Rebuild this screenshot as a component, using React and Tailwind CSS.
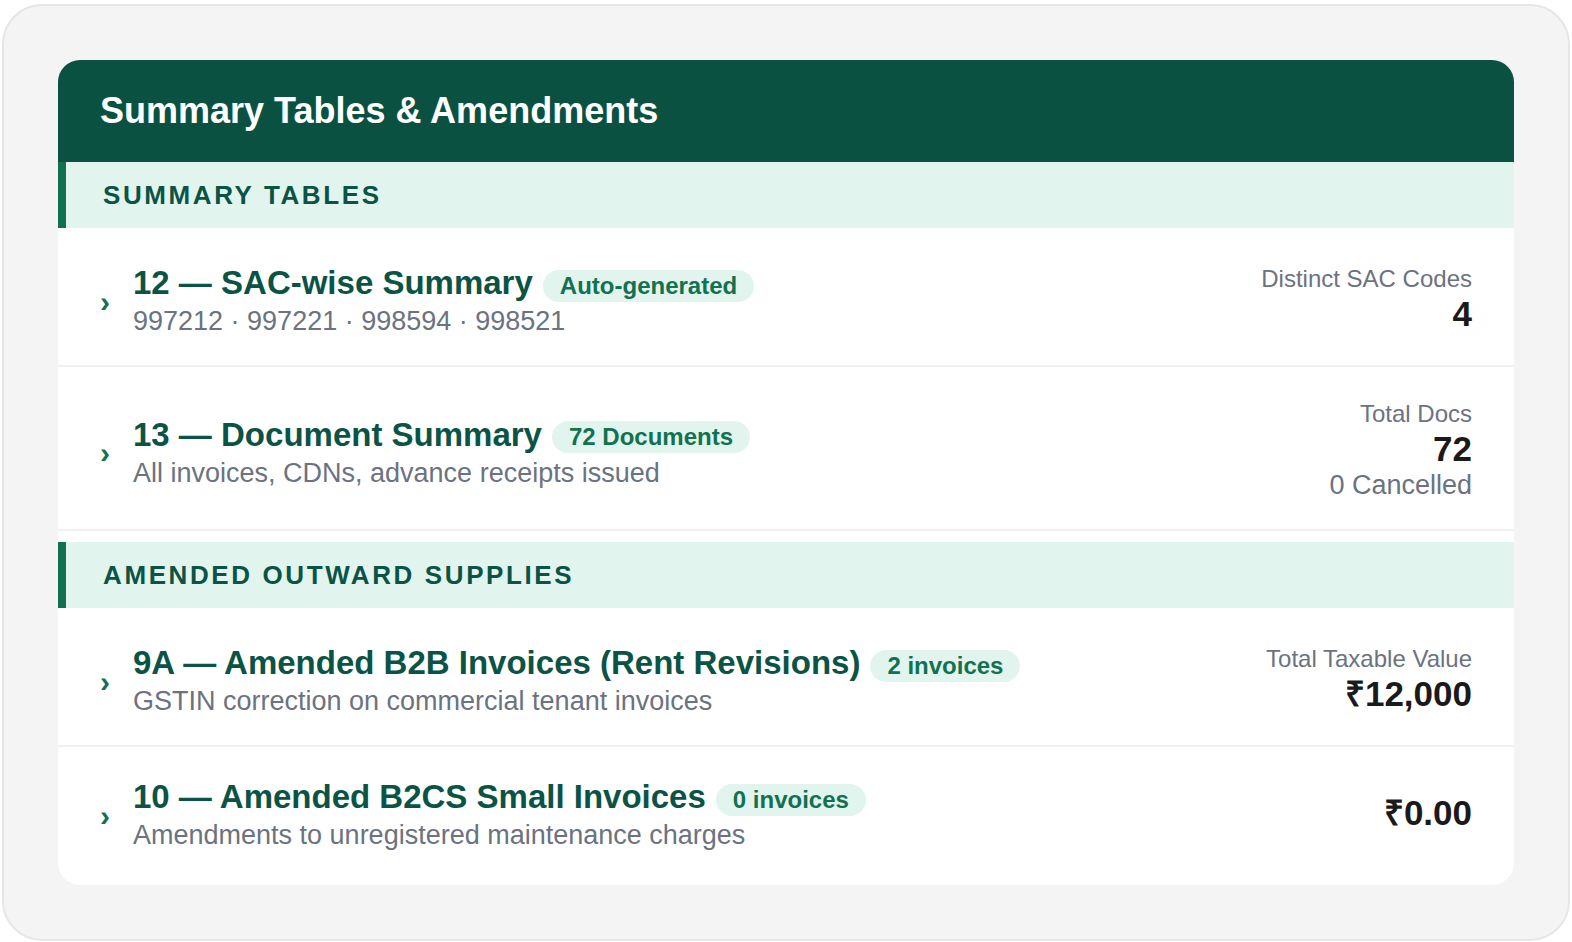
const sections = [
  {
    heading: 'Summary Tables',
    rows: [
      {
        title: '12 — SAC-wise Summary',
        badge: 'Auto-generated',
        sub: '997212 · 997221 · 998594 · 998521',
        label: 'Distinct SAC Codes',
        value: '4',
      },
      {
        title: '13 — Document Summary',
        badge: '72 Documents',
        sub: 'All invoices, CDNs, advance receipts issued',
        label: 'Total Docs',
        value: '72',
        note: '0 Cancelled',
      },
    ],
  },
  {
    heading: 'Amended Outward Supplies',
    rows: [
      {
        title: '9A — Amended B2B Invoices (Rent Revisions)',
        badge: '2 invoices',
        sub: 'GSTIN correction on commercial tenant invoices',
        label: 'Total Taxable Value',
        value: '₹12,000',
      },
      {
        title: '10 — Amended B2CS Small Invoices',
        badge: '0 invoices',
        sub: 'Amendments to unregistered maintenance charges',
        value: '₹0.00',
      },
    ],
  },
];

function Row({ row, last }) {
  return (
    <div
      className={`flex items-center justify-between px-[42px] ${
        last ? 'pt-[27px] pb-[34px]' : 'pt-[32px] pb-[28px] border-b-2 border-[#f0f0f0]'
      }`}
    >
      <div className="flex items-center gap-[23px]">
        <span className="text-[30px] font-bold text-[#127150] leading-none pt-[6px]">›</span>
        <div className="flex flex-col">
          <div className="flex items-center gap-[10px]">
            <span className="text-[33px] font-bold text-[#0b5345] leading-[45px]">{row.title}</span>
            <span className="mt-[6px] rounded-full bg-[#e1f5ee] px-[17px] py-[2px] text-[24px] font-bold leading-[28px] text-[#127150]">
              {row.badge}
            </span>
          </div>
          <span className="text-[27px] text-[#6b7280] leading-[32px]">{row.sub}</span>
        </div>
      </div>
      <div className="flex flex-col items-end">
        {row.label && <span className="text-[24px] text-[#6b7280] leading-[29px]">{row.label}</span>}
        <span className="text-[35px] font-bold text-[#1a1a1a] leading-[41px]">{row.value}</span>
        {row.note && <span className="text-[27px] text-[#6b7280] leading-[32px]">{row.note}</span>}
      </div>
    </div>
  );
}

export default function App() {
  return (
    <div className="bg-white px-[2px] py-[4px]" style={{ fontFamily: '"Liberation Sans", Arial, sans-serif' }}>
      <div className="rounded-[40px] border-2 border-[#e6e6e6] bg-[#f4f4f5] p-[54px]">
        <div className="overflow-hidden rounded-[22px] bg-white">
          <div className="bg-[#0a5142] px-[42px] py-[30px]">
            <h1 className="text-[36px] font-bold leading-[42px] text-white">Summary Tables &amp; Amendments</h1>
          </div>
          <div className="flex flex-col gap-[11px]">
            {sections.map((s, si) => (
              <div key={s.heading}>
                <div className="border-l-[8px] border-[#10704f] bg-[#e1f5ee] pl-[37px] py-[18px]">
                  <h2 className="text-[26px] font-bold uppercase tracking-[0.1em] leading-[30px] text-[#0b5345]">{s.heading}</h2>
                </div>
                {s.rows.map((r, i) => (
                  <Row key={r.title} row={r} last={si === sections.length - 1 && i === s.rows.length - 1} />
                ))}
              </div>
            ))}
          </div>
        </div>
      </div>
    </div>
  );
}
